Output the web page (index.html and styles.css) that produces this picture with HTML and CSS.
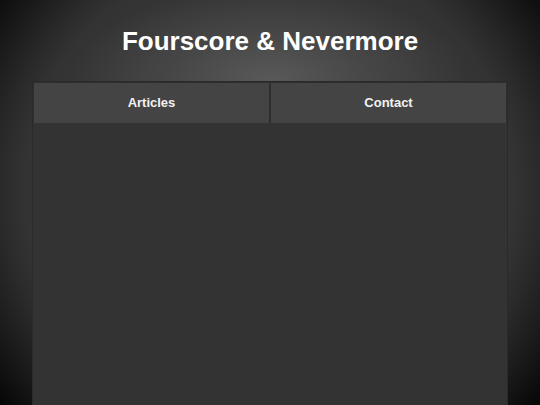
FILE: index.html
```html
<!DOCTYPE html>
<html>
<head>
<meta charset="utf-8">
<title>Fourscore &amp; Nevermore</title>
<link rel="stylesheet" href="styles.css">
</head>
<body>
<h1 class="site-title">Fourscore &amp; Nevermore</h1>

<div class="page">
  <ul class="nav">
    <li><a href="#articles">Articles</a></li>
    <li><a href="#contact">Contact</a></li>
  </ul>
  <div class="content"></div>
</div>
</body>
</html>
```

FILE: styles.css
```css
html, body {
  height: 100%;
}

/* soft spotlight behind the title over a dark vignette */
body {
  display: flex;
  flex-direction: column;
  margin: 0;
  overflow: hidden;
  font-family: "Liberation Sans", Arial, sans-serif;
  color: #fff;
  background-color: #000;
  background-image:
    radial-gradient(ellipse 200px 90px at 50% 78px, rgba(255, 255, 255, 0.16), rgba(255, 255, 255, 0.07) 50%, rgba(255, 255, 255, 0) 100%),
    radial-gradient(ellipse 300px 290px at 50% 47%, #3a3a3a 0%, #383838 60%, #333 82%, #2a2a2a 90%, #121212 108%, #050505 117%);
}

.site-title {
  margin: 0;
  padding: 25px 0 23px;
  font-size: 26px;
  line-height: 33px;
  font-weight: bold;
  text-align: center;
}

.page {
  flex: 1;
  width: 474px;
  margin: 0 auto;
  border: 1px solid #2a2a2a;
  border-bottom: 0;
  background: #333;
}

.nav {
  display: grid;
  grid-template-columns: 1fr 1fr;
  gap: 2px;
  margin: 0;
  padding: 1px 1px 0;
  list-style: none;
  background: #2e2e2e;
}

.nav li {
  background: #444;
}

.nav a {
  display: block;
  height: 40px;
  line-height: 40px;
  text-align: center;
  font-size: 13px;
  font-weight: bold;
  color: #f2f2f2;
  text-decoration: none;
}
```
